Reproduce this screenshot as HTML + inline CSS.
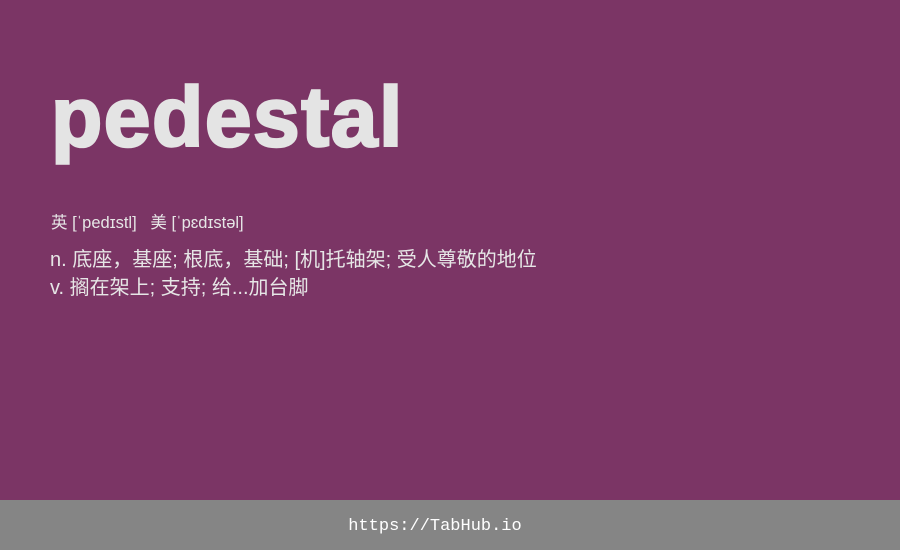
<!DOCTYPE html>
<html><head><meta charset="utf-8"><style>
html,body{margin:0;padding:0;width:900px;height:550px;overflow:hidden;background:#7b3565;}
body{position:relative;font-family:"Liberation Sans","Noto Sans CJK SC",sans-serif;color:#e6e6e6;}
.t{position:absolute;left:51px;top:67px;font-family:"Liberation Sans",sans-serif;font-size:84px;font-weight:700;line-height:100px;color:#e4e4e4;-webkit-text-stroke:2.5px #e4e4e4;letter-spacing:1.5px;}
.p{position:absolute;left:51px;top:213px;font-size:16.5px;line-height:20px;}
.d{position:absolute;left:50px;top:246px;font-size:20px;line-height:28px;}
.f{position:absolute;left:0;top:502px;width:870px;height:50px;color:#fff;font-family:"Liberation Mono",monospace;font-size:17px;line-height:50px;text-align:center;}
.fb{position:absolute;left:0;top:500px;width:900px;height:50px;background:#858585;}
</style></head><body>
<div class="t">pedestal</div>
<div class="p">英 [ˈpedɪstl] &nbsp;&nbsp;美 [ˈpɛdɪstəl]</div>
<div class="d">n. 底座，基座; 根底，基础; [机]托轴架; 受人尊敬的地位<br>v. 搁在架上; 支持; 给...加台脚</div>
<div class="fb"></div>
<div class="f">https://TabHub.io</div>
</body></html>
